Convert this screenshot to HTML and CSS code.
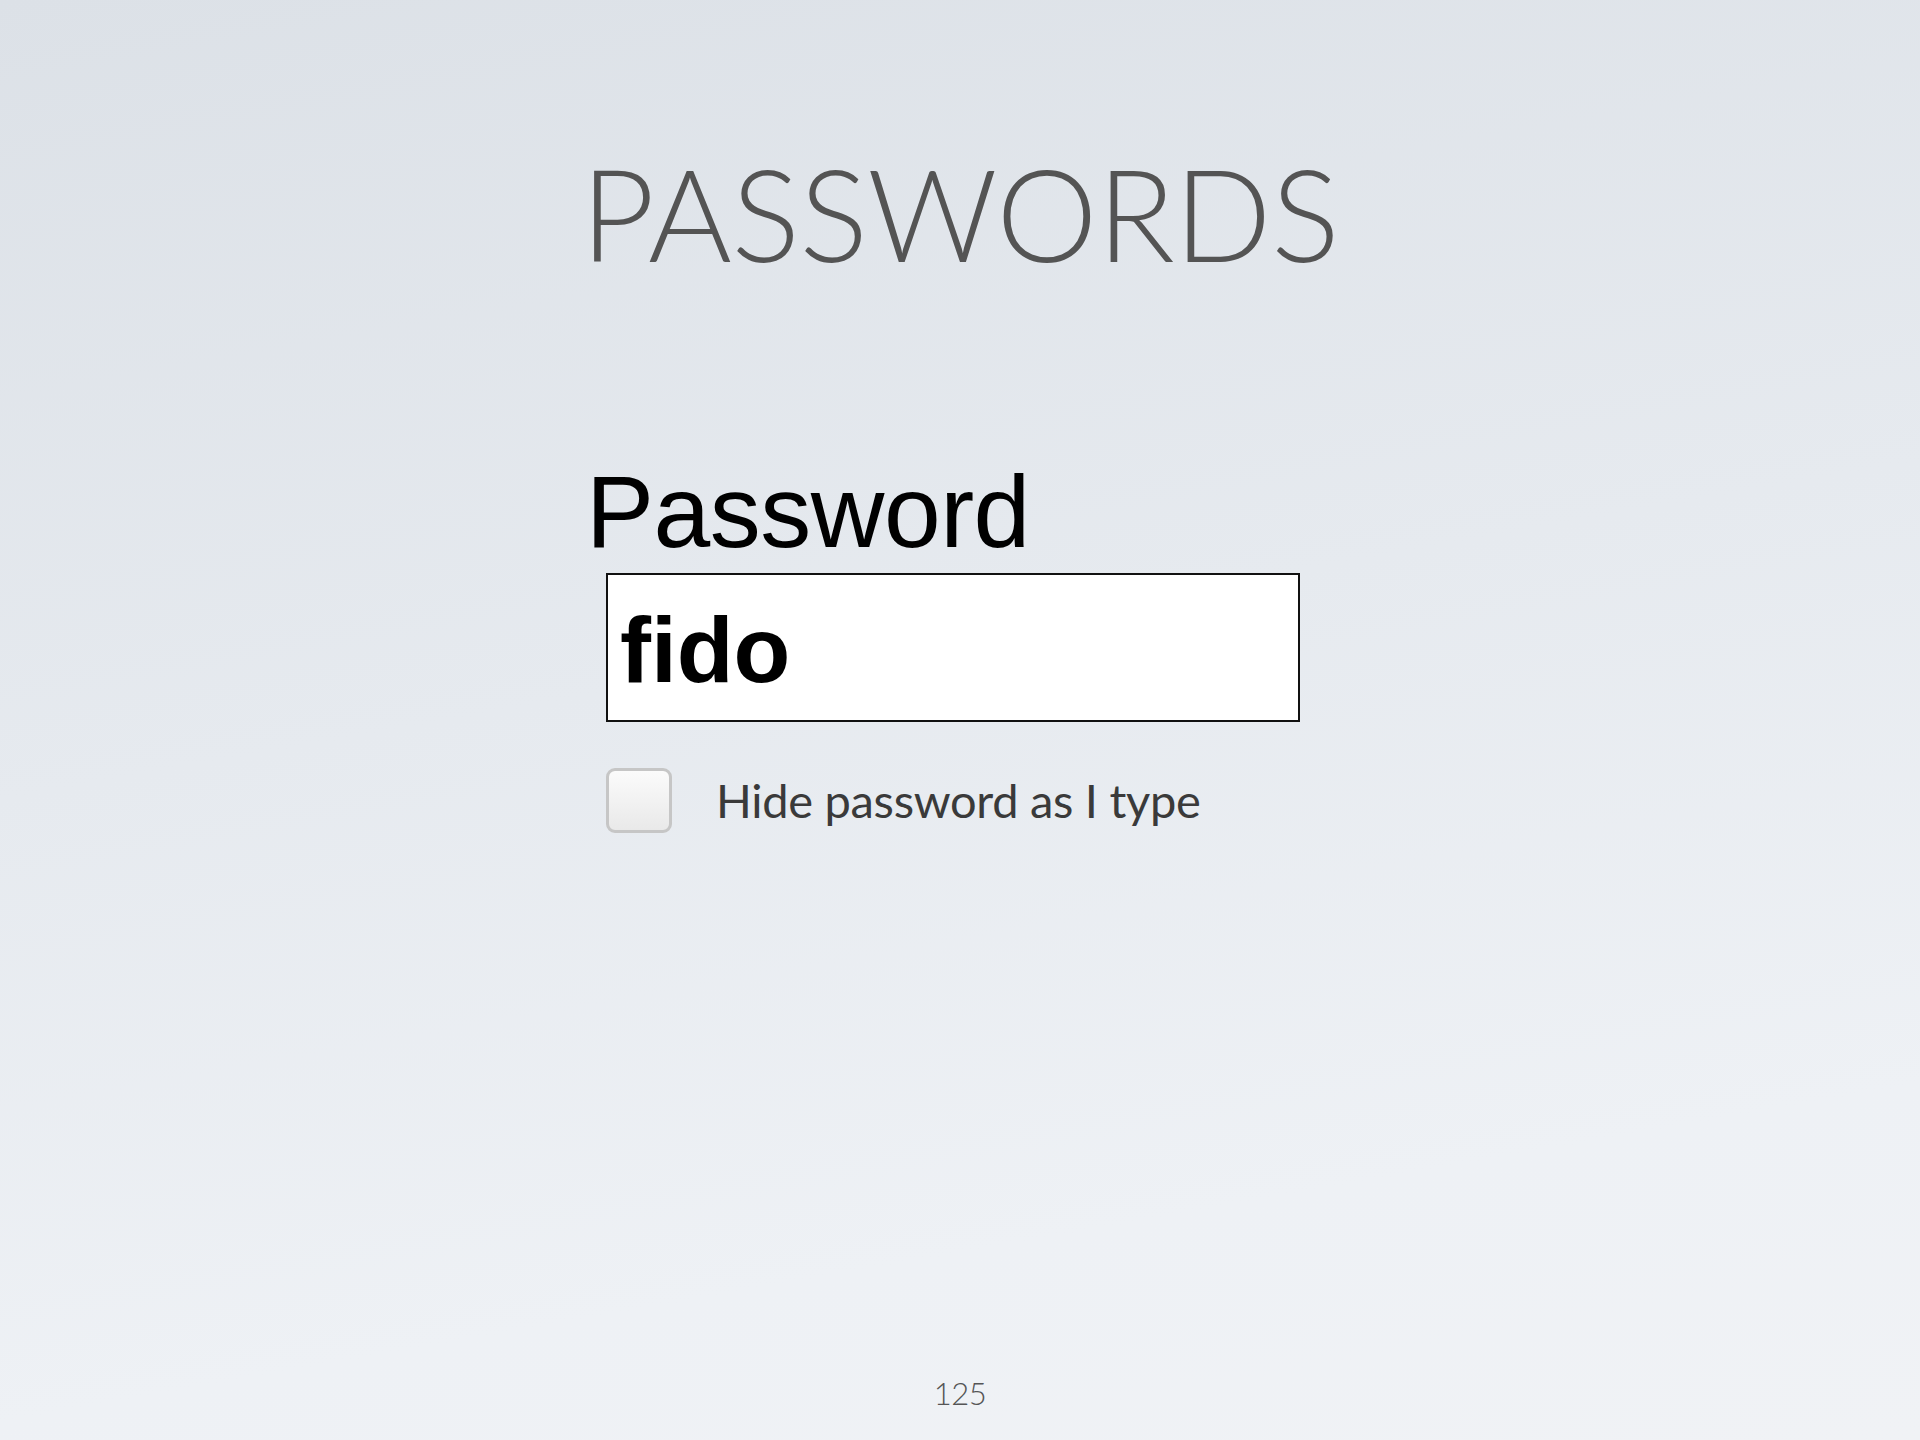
FILE: index.html
```html
<!DOCTYPE html>
<html lang="en">
<head>
    <meta charset="UTF-8">
    <meta name="viewport" content="width=device-width, initial-scale=1.0">
    <title>Passwords</title>
    <link rel="stylesheet" href="styles.css">
</head>
<body>
    <div class="slide">
        <h1 class="title">PASSWORDS</h1>

        <div class="login-form">
            <label class="field-label" for="password">Password</label>
            <div class="field" id="password">fido</div>
            <div class="option">
                <span class="checkbox"></span>
                <span class="option-text">Hide password as I type</span>
            </div>
        </div>

        <div class="page-num">125</div>
    </div>
</body>
</html>
```
FILE: styles.css
```css
html, body {
    margin: 0;
    padding: 0;
}
body {
    background: linear-gradient(170deg, #dce1e7 0%, #e6eaef 45%, #eef1f5 80%, #f0f2f5 100%);
    min-height: 1440px;
}
.slide {
    height: 1440px;
    display: flex;
    flex-direction: column;
    align-items: center;
    box-sizing: border-box;
    padding: 149px 0 31px;
}
.title {
    font-family: Lato, "Open Sans", sans-serif;
    font-weight: 300;
    font-size: 128px;
    line-height: 1;
    color: #545454;
    margin: 0;
    letter-spacing: -0.5px;
}
.login-form {
    width: 734px;
    margin-top: 184px;
}
.field-label {
    display: block;
    margin-left: -7px;
    font-family: "Liberation Sans", Arial, sans-serif;
    font-size: 102px;
    line-height: 1;
    letter-spacing: -0.5px;
    color: #000;
}
.field {
    box-sizing: border-box;
    width: 694px;
    height: 149px;
    margin: 10px 0 0 13px;
    padding: 29px 12px 0;
    background: #fff;
    border: 2px solid #111;
    font-family: "Liberation Sans", Arial, sans-serif;
    font-weight: bold;
    font-size: 93px;
    line-height: 1;
    color: #000;
}
.option {
    display: flex;
    align-items: center;
    gap: 44px;
    margin: 46px 0 0 13px;
}
.checkbox {
    box-sizing: border-box;
    width: 66px;
    height: 65px;
    border: 3px solid #c6c6c6;
    border-radius: 9px;
    background: linear-gradient(#fbfbfb, #e9e9e9);
}
.option-text {
    font-family: Lato, "Open Sans", sans-serif;
    font-size: 47px;
    line-height: 1;
    letter-spacing: -0.3px;
    color: #3a3a3a;
}
.page-num {
    margin-top: auto;
    font-family: Lato, "Open Sans", sans-serif;
    font-weight: 300;
    font-size: 31px;
    line-height: 1;
    letter-spacing: -0.5px;
    color: #555;
}
```
